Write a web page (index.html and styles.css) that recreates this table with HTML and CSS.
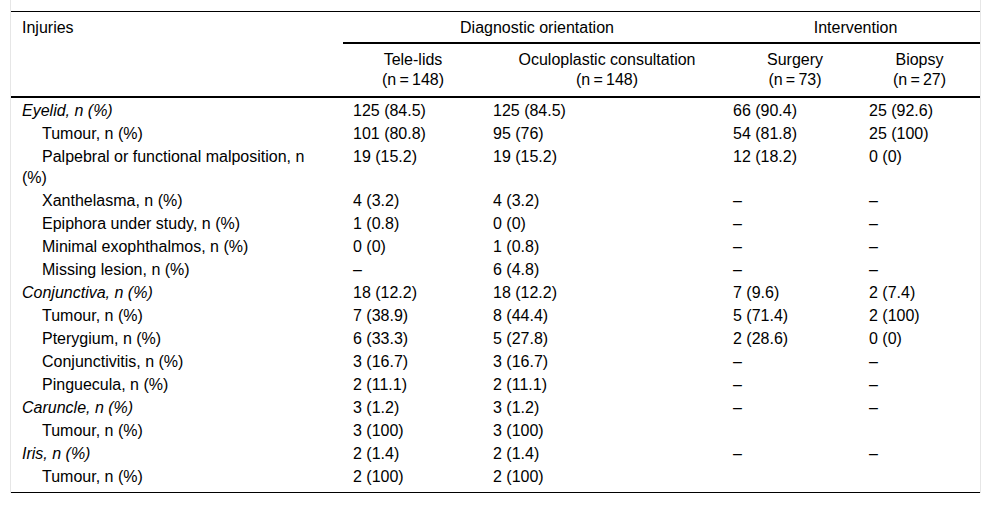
FILE: index.html
```html
<!DOCTYPE html>
<html lang="en">
<head>
<meta charset="utf-8">
<title>Injuries table</title>
<link rel="stylesheet" href="styles.css">
</head>
<body>
<div class="table-wrap">
<table class="data">
<colgroup>
<col class="c1"><col class="c2"><col class="c3"><col class="c4"><col class="c5">
</colgroup>
<thead>
<tr class="grp">
<th rowspan="2" class="lbl">Injuries</th>
<th colspan="2" class="gh">Diagnostic orientation</th>
<th colspan="2" class="gh">Intervention</th>
</tr>
<tr class="sub">
<th>Tele-lids<br>(n&#8201;=&#8201;148)</th>
<th class="shift">Oculoplastic consultation<br>(n&#8201;=&#8201;148)</th>
<th class="shift">Surgery<br>(n&#8201;=&#8201;73)</th>
<th>Biopsy<br>(n&#8201;=&#8201;27)</th>
</tr>
</thead>
<tbody>
<tr class="first"><td class="cat">Eyelid, n (%)</td><td>125 (84.5)</td><td>125 (84.5)</td><td>66 (90.4)</td><td>25 (92.6)</td></tr>
<tr><td class="ind">Tumour, n (%)</td><td>101 (80.8)</td><td>95 (76)</td><td>54 (81.8)</td><td>25 (100)</td></tr>
<tr><td class="ind">Palpebral or functional malposition, n (%)</td><td>19 (15.2)</td><td>19 (15.2)</td><td>12 (18.2)</td><td>0 (0)</td></tr>
<tr><td class="ind">Xanthelasma, n (%)</td><td>4 (3.2)</td><td>4 (3.2)</td><td>–</td><td>–</td></tr>
<tr><td class="ind">Epiphora under study, n (%)</td><td>1 (0.8)</td><td>0 (0)</td><td>–</td><td>–</td></tr>
<tr><td class="ind">Minimal exophthalmos, n (%)</td><td>0 (0)</td><td>1 (0.8)</td><td>–</td><td>–</td></tr>
<tr><td class="ind">Missing lesion, n (%)</td><td>–</td><td>6 (4.8)</td><td>–</td><td>–</td></tr>
<tr><td class="cat">Conjunctiva, n (%)</td><td>18 (12.2)</td><td>18 (12.2)</td><td>7 (9.6)</td><td>2 (7.4)</td></tr>
<tr><td class="ind">Tumour, n (%)</td><td>7 (38.9)</td><td>8 (44.4)</td><td>5 (71.4)</td><td>2 (100)</td></tr>
<tr><td class="ind">Pterygium, n (%)</td><td>6 (33.3)</td><td>5 (27.8)</td><td>2 (28.6)</td><td>0 (0)</td></tr>
<tr><td class="ind">Conjunctivitis, n (%)</td><td>3 (16.7)</td><td>3 (16.7)</td><td>–</td><td>–</td></tr>
<tr><td class="ind">Pinguecula, n (%)</td><td>2 (11.1)</td><td>2 (11.1)</td><td>–</td><td>–</td></tr>
<tr><td class="cat">Caruncle, n (%)</td><td>3 (1.2)</td><td>3 (1.2)</td><td>–</td><td>–</td></tr>
<tr><td class="ind">Tumour, n (%)</td><td>3 (100)</td><td>3 (100)</td><td></td><td></td></tr>
<tr><td class="cat">Iris, n (%)</td><td>2 (1.4)</td><td>2 (1.4)</td><td>–</td><td>–</td></tr>
<tr class="last"><td class="ind">Tumour, n (%)</td><td>2 (100)</td><td>2 (100)</td><td></td><td></td></tr>
</tbody>
</table>
</div>
</body>
</html>
```

FILE: styles.css
```css
html, body {
  margin: 0;
  padding: 0;
  background: #fff;
}

body {
  font-family: "Liberation Sans", Arial, sans-serif;
  font-size: 16px;
  color: #000;
}

.table-wrap {
  margin: 0 11px 0 10px;
  padding-top: 11px;
  border-left: 1px solid #e6e6e6;
  border-right: 1px solid #e6e6e6;
  width: 969px;
}

.data {
  border-collapse: separate;
  border-spacing: 0;
  width: 969px;
  table-layout: fixed;
  border-top: 1px solid #000;
  border-bottom: 1px solid #000;
}

.c1 { width: 332px; }
.c2 { width: 140px; }
.c3 { width: 240px; }
.c4 { width: 136px; }
.c5 { width: 121px; }

.data th {
  font-weight: normal;
  line-height: 20px;
  vertical-align: top;
}

.grp th {
  padding: 5px 10px 4px;
  line-height: 21px;
}

.grp .lbl {
  text-align: left;
  padding-left: 11px;
  border-bottom: 2px solid #000;
}

.grp .gh {
  text-align: center;
  padding-left: 18px;
  padding-right: 10px;
  border-bottom: 2px solid #000;
}

.sub th {
  text-align: center;
  padding: 6px 10px 6px;
  border-bottom: 2px solid #000;
}

.sub th.shift {
  padding-left: 18px;
  padding-right: 10px;
}

.data td {
  padding: 1px 10px;
  line-height: 21px;
  vertical-align: top;
  text-align: left;
}

.data td:first-child {
  padding-left: 11px;
  padding-right: 20px;
}

.data .cat {
  font-style: italic;
}

.data .ind {
  text-indent: 20px;
}

.first td {
  padding-top: 2px;
}

.last td {
  padding-bottom: 5px;
}
```
